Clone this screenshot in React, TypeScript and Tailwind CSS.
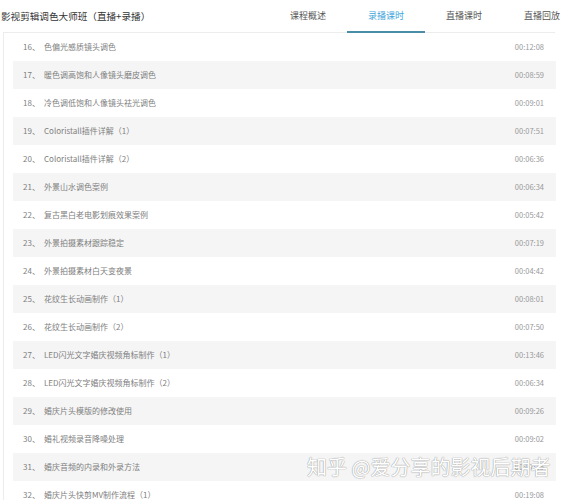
import React from "react";

const rows: [string, string][] = [
  ["色偏光感质镜头调色", "00:12:08"],
  ["暖色调高饱和人像镜头磨皮调色", "00:08:59"],
  ["冷色调低饱和人像镜头祛光调色", "00:09:01"],
  ["Coloristall插件详解（1）", "00:07:51"],
  ["Coloristall插件详解（2）", "00:06:36"],
  ["外景山水调色案例", "00:06:34"],
  ["复古黑白老电影划痕效果案例", "00:05:42"],
  ["外景拍摄素材跟踪稳定", "00:07:19"],
  ["外景拍摄素材白天变夜景", "00:04:42"],
  ["花纹生长动画制作（1）", "00:08:01"],
  ["花纹生长动画制作（2）", "00:07:50"],
  ["LED闪光文字婚庆视频角标制作（1）", "00:13:46"],
  ["LED闪光文字婚庆视频角标制作（2）", "00:06:34"],
  ["婚庆片头模版的修改使用", "00:09:26"],
  ["婚礼视频录音降噪处理", "00:09:02"],
  ["婚庆音频的内录和外录方法", "00:07:15"],
  ["婚庆片头快剪MV制作流程（1）", "00:19:08"],
];

const font = { fontFamily: '"Noto Sans CJK SC", "Noto Sans", sans-serif' };

export default function App() {
  return (
    <div className="relative w-[565px] h-[500px] overflow-hidden bg-white" style={font}>
      <div className="flex items-center h-[32px]">
        <div className="shrink-0 pl-[1px] text-[9.6px] text-[#333] whitespace-nowrap w-[269px]">
          影视剪辑调色大师班（直播+录播）
        </div>
        <div className="flex h-full shrink-0">
          {["课程概述", "录播课时", "直播课时", "直播回放"].map((t, i) => (
            <div
              key={t}
              className={
                "relative w-[78px] shrink-0 flex items-center justify-center text-[9px] " +
                (i === 1 ? "text-[#3ea6dc]" : "text-[#555]")
              }
            >
              {t}
              {i === 1 && (
                <div className="absolute left-0 right-0 bottom-[-1px] h-[2px] bg-[#4a8ea6]" />
              )}
            </div>
          ))}
        </div>
      </div>
      <div className="ml-[3px] w-[552px] border-l border-t border-[#ececec] pl-[9px]">
        {rows.map(([title, time], i) => (
          <div
            key={i}
            className={
              "flex items-center h-[28px] pl-[10px] pr-[12px] w-[543px] " +
              (i % 2 === 1 ? "bg-[#f5f5f5]" : "bg-white")
            }
          >
            <span className="w-[21px] text-[8px] text-[#808080]">{16 + i}、</span>
            <span className="flex-1 text-[8px] text-[#808080] whitespace-nowrap">{title}</span>
            <span className="text-[7.5px] text-[#999]">{time}</span>
          </div>
        ))}
      </div>
      <div
        className="absolute left-[307px] top-[457px] text-[20px] text-white whitespace-nowrap leading-none"
        style={{ textShadow: "0 0 1px #999, 0 0 1px #999" }}
      >
        知乎 @爱分享的影视后期者
      </div>
    </div>
  );
}
